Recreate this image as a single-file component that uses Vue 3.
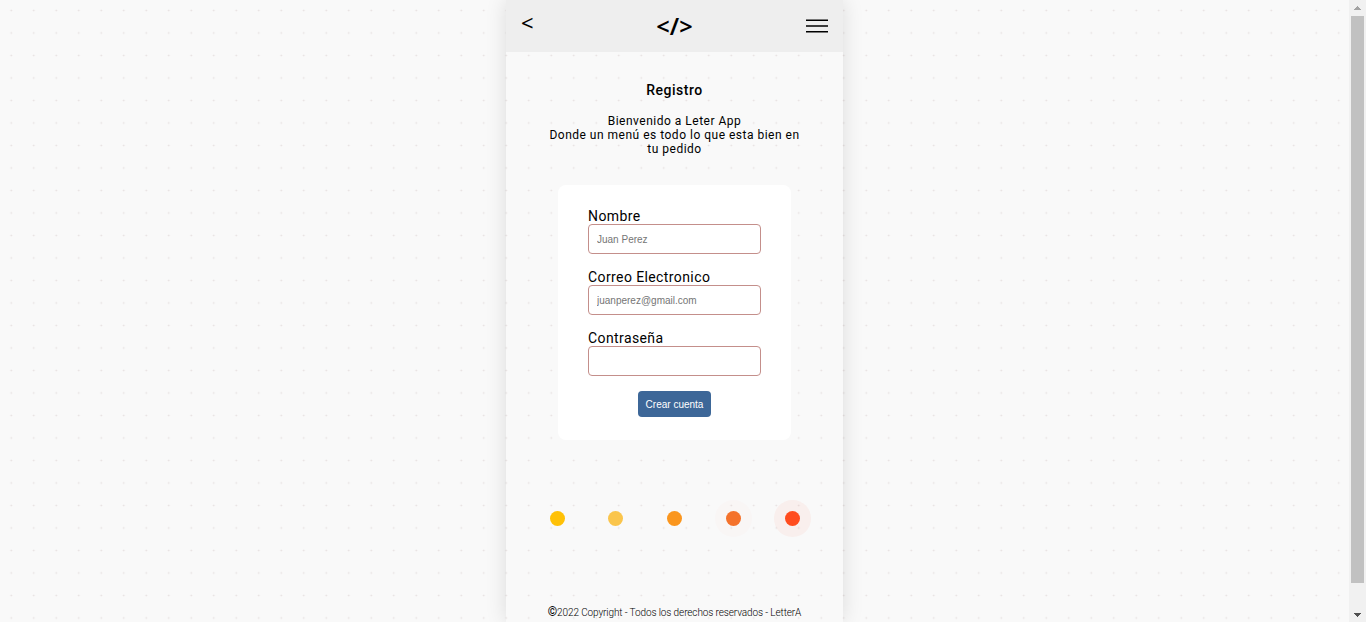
<script setup>
const fields = [
  { id: 'nombre', label: 'Nombre', type: 'text', hint: 'Juan Perez' },
  { id: 'correo', label: 'Correo Electronico', type: 'email', hint: 'juanperez@gmail.com' },
  { id: 'clave', label: 'Contraseña', type: 'password', hint: '' }
]
const dots = ['one', 'two', 'three', 'four', 'five']
</script>

<template>
  <div class="page">
    <div class="canvas">
      <main class="phone">
        <header class="bar">
          <span class="back">&lt;</span>
          <span class="logo">&lt;/&gt;</span>
          <svg class="menu" width="22" height="16" viewBox="0 0 22 16">
            <path d="M0 2.25H22M0 8H22M0 13.75H22" stroke="#000" stroke-width="1.5" />
          </svg>
        </header>
        <h1>Registro</h1>
        <p class="intro">Bienvenido a Leter App<br />Donde un menú es todo lo que esta bien en<br />tu pedido</p>
        <form class="card" @submit.prevent>
          <div v-for="f in fields" :key="f.id" class="field">
            <label :for="f.id">{{ f.label }}</label>
            <input :id="f.id" :type="f.type" :placeholder="f.hint" />
          </div>
          <button>Crear cuenta</button>
        </form>
        <div class="dots">
          <i v-for="d in dots" :key="d" :class="d"></i>
        </div>
        <footer><b>©</b>2022 Copyright - Todos los derechos reservados - LetterA</footer>
      </main>
    </div>
    <aside class="scroll">
      <svg width="17" height="622" viewBox="0 0 17 622" shape-rendering="crispEdges">
        <path d="M2 16H15V583H2Z" fill="#c1c1c1" />
        <path d="M8 6h1v1h1v1h1v1h1v1H5V9h1V8h1V7h1z" fill="#a3a3a3" />
        <path d="M5 613h7v1h-1v1h-1v1H9v1H8v-1H7v-1H6v-1H5z" fill="#505050" />
      </svg>
    </aside>
  </div>
</template>

<style>
html, body { margin: 0; overflow: hidden; }
</style>

<style scoped>
* { box-sizing: border-box; }
.page { display: flex; width: 1366px; height: 622px; overflow: hidden; font-family: Roboto, sans-serif; color: #000; background: #f9f9f9; }
.canvas {
  flex: 1; display: flex; justify-content: center; overflow: hidden;
  background: radial-gradient(circle, #e5dfdf 0.5px, transparent 1.2px) 0 -0.8px / 22.5px 22.5px #f9f9f9;
}
.phone {
  width: 337px; height: 622px; display: flex; flex-direction: column; align-items: center;
  box-shadow: 0 0 20px rgba(0, 0, 0, .12);
  background: radial-gradient(circle, #e5dfdf 0.5px, transparent 1.2px) 11.5px -0.8px / 22.5px 22.5px #f9f9f9;
}
.bar { width: 100%; height: 52px; flex: none; display: flex; justify-content: space-between; background: #eee; padding: 0 15px; }
.back { width: 22px; font: 22px/26px "Noto Sans", sans-serif; padding-top: 9px; }
.logo { font: 600 23.5px/26px "Noto Sans", sans-serif; padding-top: 13px; }
.menu { margin-top: 18px; }
h1 { margin: 30px 0 0; font-size: 14px; line-height: 16px; font-weight: 500; letter-spacing: .5px; }
.intro { margin: 16px 0 0; font-size: 12px; line-height: 14px; letter-spacing: .5px; text-align: center; white-space: nowrap; }
.card { margin: 29px 0 0; width: 233px; height: 255px; flex: none; background: #fff; border-radius: 8px; padding: 23px 30px; display: flex; flex-direction: column; align-items: center; }
.field { width: 173px; height: 61px; flex: none; display: flex; flex-direction: column; }
label { font-size: 14px; line-height: 16px; letter-spacing: .4px; }
input { width: 173px; height: 30px; border: 1px solid #c48f8b; border-radius: 4px; padding: 0 8px; font: 10px "Liberation Sans", Arial, sans-serif; background: #fff; outline: 0; }
input::placeholder { color: #757575; }
button { width: 73px; height: 26px; border: 0; border-radius: 4px; padding: 1px 0 0; background: #3d6798; color: #fff; font: 10px "Liberation Sans", Arial, sans-serif; }
.dots { margin-top: 71px; width: 250px; display: flex; justify-content: space-between; }
i { width: 15px; height: 15px; border-radius: 50%; }
.one { background: #ffc107; }
.two { background: #fac54c; }
.three { background: #fa961e; }
.four { background: #f4722b; box-shadow: 0 0 0 11px rgba(255, 76, 30, .015); }
.five { background: #ff4c1e; box-shadow: 0 0 0 11px rgba(255, 76, 30, .055); }
footer { margin-top: 80px; font-size: 10px; line-height: 13px; font-weight: 300; letter-spacing: -.11px; white-space: nowrap; }
footer b { font-weight: 700; font-size: 12px; }
.scroll { width: 17px; background: #f1f1f1; }
.scroll svg { display: block; }
</style>
